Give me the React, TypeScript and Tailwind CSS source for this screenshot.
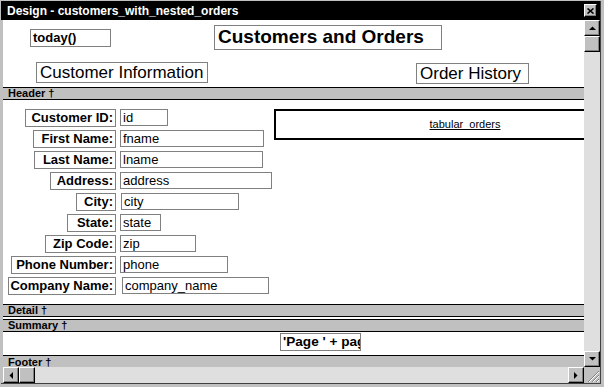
const rows = [
  { label: 'Customer ID:', lw: 'w-[91px]', field: 'id', fw: 'w-[48px]' },
  { label: 'First Name:', lw: 'w-[83px]', field: 'fname', fw: 'w-[144px]' },
  { label: 'Last Name:', lw: 'w-[82px]', field: 'lname', fw: 'w-[143px]' },
  { label: 'Address:', lw: 'w-[66px]', field: 'address', fw: 'w-[152px]' },
  { label: 'City:', lw: 'w-[40px]', field: 'city', fw: 'w-[118px] ml-px' },
  { label: 'State:', lw: 'w-[49px]', field: 'state', fw: 'w-[41px]' },
  { label: 'Zip Code:', lw: 'w-[71px]', field: 'zip', fw: 'w-[76px]' },
  { label: 'Phone Number:', lw: 'w-[105px]', field: 'phone', fw: 'w-[108px]' },
  { label: 'Company Name:', lw: 'w-[108px]', field: 'company_name', fw: 'w-[147px] ml-[2px]' },
]

function Bevel({ className, children }: { className: string; children?: React.ReactNode }) {
  return (
    <div
      className={`flex shrink-0 items-center justify-center border border-t-white border-l-white border-r-black border-b-black bg-[#c0c0c0] shadow-[inset_-1px_-1px_0_#808080] ${className}`}
    >
      {children}
    </div>
  )
}

function Arrow({ dir }: { dir: 'up' | 'down' | 'left' | 'right' }) {
  const pts = {
    up: '0,4 7,4 3.5,0.5',
    down: '0,0 7,0 3.5,3.5',
    left: '4,0 4,7 0.5,3.5',
    right: '0,0 0,7 3.5,3.5',
  }[dir]
  const w = dir === 'up' || dir === 'down' ? 7 : 4
  const h = dir === 'up' || dir === 'down' ? 4 : 7
  return (
    <svg width={w} height={h} viewBox={`0 0 ${w} ${h}`}>
      <polygon points={pts} fill="#000" />
    </svg>
  )
}

function BandBar({ label, className = '' }: { label: string; className?: string }) {
  return (
    <div
      className={`shrink-0 border-t border-black bg-[#c0c0c0] pl-[5px] text-[11px] font-bold leading-[11px] text-black ${className}`}
    >
      {label} †
    </div>
  )
}

export default function App() {
  return (
    <div className="flex h-[387px] w-[604px] flex-col bg-[#c0c0c0] pt-px pr-[3px] pb-[3px] pl-px font-['Liberation_Sans',Arial,sans-serif] text-black">
      <div className="flex flex-1 flex-col border-r border-b border-[#404040]">
        {/* Title bar */}
        <div className="flex h-[19px] shrink-0 items-center justify-between bg-black pr-[3px] pl-[6px]">
          <span className="text-[12px] font-bold leading-none text-white">Design - customers_with_nested_orders</span>
          <Bevel className="h-[13px] w-[13px]">
            <svg width="7" height="6" viewBox="0 0 7 6">
              <path d="M0.5 0.5 L6.5 5.5 M6.5 0.5 L0.5 5.5" stroke="#000" strokeWidth="1.6" />
            </svg>
          </Bevel>
        </div>

        {/* Body */}
        <div className="flex h-[347px] shrink-0 pl-[2px]">
          {/* Report canvas */}
          <div className="flex flex-1 flex-col overflow-hidden bg-white">
            {/* Page header */}
            <div className="relative h-[67px] shrink-0">
              <div className="absolute top-[9px] left-[27px] flex h-[18px] w-[81px] items-center border border-[#808080] pl-[2px] text-[13px] font-bold">
                today()
              </div>
              <div className="absolute top-[5px] left-[211px] flex h-[25px] w-[228px] items-center border border-[#808080] pl-[3px] text-[19px] font-bold">
                Customers and Orders
              </div>
              <div className="absolute top-[42px] left-[33px] flex h-[21px] w-[172px] items-center border border-[#808080] pl-[3px] text-[17px]">
                Customer Information
              </div>
              <div className="absolute top-[43px] left-[413px] flex h-[21px] w-[113px] items-center border border-[#808080] pl-[3px] text-[17px]">
                Order History
              </div>
            </div>

            <BandBar label="Header" className="h-[13px] border-b" />

            {/* Detail */}
            <div className="flex h-[204px] shrink-0 pt-[9px]">
              <div className="grid w-[269px] shrink-0 grid-cols-[113px_1fr] content-start gap-x-[4px] gap-y-[3px]">
                {rows.map((r) => (
                  <div key={r.field} className="contents">
                    <div
                      className={`flex h-[18px] items-center justify-end justify-self-end border border-[#808080] pr-[2px] text-[13px] font-bold ${r.lw}`}
                    >
                      {r.label}
                    </div>
                    <div
                      className={`flex h-[17px] items-center justify-self-start overflow-hidden border border-[#808080] pl-[2px] text-[13px] leading-[14px] whitespace-nowrap ${r.fw}`}
                    >
                      {r.field}
                    </div>
                  </div>
                ))}
              </div>
              <div className="ml-[2px] flex h-[31px] w-[382px] shrink-0 items-center justify-center border-2 border-black">
                <span className="text-[11px] underline">tabular_orders</span>
              </div>
            </div>

            <BandBar label="Detail" className="h-[13px] border-b" />
            <div className="h-[2px] shrink-0" />
            <BandBar label="Summary" className="h-[13px] border-b" />

            {/* Page footer */}
            <div className="h-[23px] shrink-0 pt-px pl-[277px]">
              <div className="flex h-[18px] w-[81px] items-center overflow-hidden border border-[#808080] pl-[2px] text-[13.6px] font-bold whitespace-nowrap">
                'Page ' + pag
              </div>
            </div>

            <BandBar label="Footer" className="flex-1 pt-px" />
          </div>

          {/* Vertical scrollbar */}
          <div className="flex w-[16px] shrink-0 flex-col bg-[#dfdfdf]">
            <Bevel className="h-[16px] w-[16px]">
              <Arrow dir="up" />
            </Bevel>
            <Bevel className="h-[16px] w-[16px]" />
            <div className="flex-1" />
            <Bevel className="h-[16px] w-[16px]">
              <Arrow dir="down" />
            </Bevel>
          </div>
        </div>

        {/* Horizontal scrollbar */}
        <div className="flex h-[16px] shrink-0 pl-[2px]">
          <div className="flex flex-1 bg-[#dfdfdf]">
            <Bevel className="h-[16px] w-[16px]">
              <Arrow dir="left" />
            </Bevel>
            <Bevel className="h-[16px] w-[16px]" />
            <div className="flex-1" />
            <Bevel className="h-[16px] w-[16px]">
              <Arrow dir="right" />
            </Bevel>
          </div>
          <div className="flex h-[16px] w-[16px] shrink-0 items-end justify-end bg-[#c0c0c0]">
            <svg width="14" height="14" viewBox="0 0 14 14">
              <path d="M13 2 L2 13 M13 6 L6 13 M13 10 L10 13" stroke="#808080" strokeWidth="1" />
              <path d="M13 3 L3 13 M13 7 L7 13 M13 11 L11 13" stroke="#fff" strokeWidth="1" />
            </svg>
          </div>
        </div>
      </div>
    </div>
  )
}
